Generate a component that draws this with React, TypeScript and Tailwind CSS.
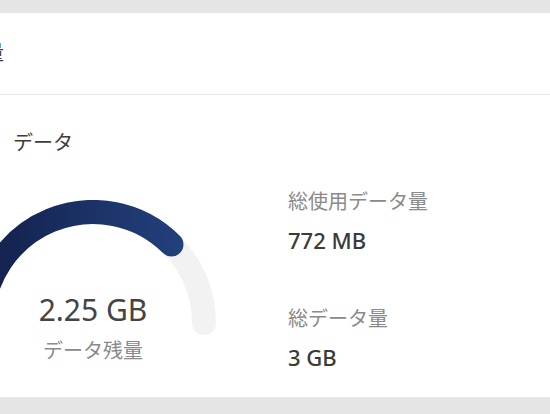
import React from "react"

function Gauge({ remaining, total }: { remaining: number; total: number }) {
  const cx = 123
  const cy = 123
  const r = 111
  const angle = Math.PI * (1 - remaining / total)
  const ex = cx + r * Math.cos(angle)
  const ey = cy - r * Math.sin(angle)

  return (
    <svg width="246" height="136" viewBox="0 0 246 136" className="absolute left-0 top-0">
      <defs>
        <linearGradient id="gaugeFill" gradientUnits="userSpaceOnUse" x1="0" y1="0" x2="210" y2="0">
          <stop offset="0" stopColor="#121e48" />
          <stop offset="1" stopColor="#22407c" />
        </linearGradient>
      </defs>
      <path
        d={`M ${cx - r} ${cy} A ${r} ${r} 0 0 1 ${cx + r} ${cy}`}
        fill="none"
        stroke="#f2f2f2"
        strokeWidth="24"
        strokeLinecap="round"
      />
      <path
        d={`M ${cx - r} ${cy} A ${r} ${r} 0 0 1 ${ex.toFixed(2)} ${ey.toFixed(2)}`}
        fill="none"
        stroke="url(#gaugeFill)"
        strokeWidth="24"
        strokeLinecap="round"
      />
    </svg>
  )
}

function Stat({ label, value, className }: { label: string; value: string; className?: string }) {
  return (
    <div className={className}>
      <div className="text-[20px] leading-none text-[#8a8a8a]">{label}</div>
      <div className="mt-[17px] text-[22px] leading-none font-medium text-[#3a3a3a]">{value}</div>
    </div>
  )
}

export default function App() {
  return (
    <div
      className="w-[550px] h-[414px] overflow-hidden bg-[#e5e5e5] pt-[13px]"
      style={{ fontFamily: '"Noto Sans", "Noto Sans CJK JP", sans-serif' }}
    >
      <div className="bg-white">
        <div className="h-[81px] pt-[30px] whitespace-nowrap">
          <h1 className="-ml-[116px] text-[20px] leading-none text-[#3a3a3a]">データ使用量</h1>
        </div>
        <div className="h-px bg-[#e9e9e9]" />

        <section className="h-[302px] pt-[38px]">
          <h2 className="pl-[13px] text-[20px] leading-none text-[#3c3c3c]">データ</h2>

          <div className="mt-[37px] flex">
            <div className="relative -ml-[30px] mt-[10px] h-[162px] w-[246px] shrink-0">
              <Gauge remaining={2.25} total={3} />
              <div className="absolute inset-x-0 top-[95px] flex flex-col items-center">
                <span className="text-[30px] leading-none text-[#444]">2.25 GB</span>
                <span className="mt-[16px] text-[20px] leading-none text-[#8a8a8a]">データ残量</span>
              </div>
            </div>

            <div className="ml-[72px] flex flex-col pt-[2px]">
              <Stat label="総使用データ量" value="772 MB" />
              <Stat label="総データ量" value="3 GB" className="mt-[58px]" />
            </div>
          </div>
        </section>
      </div>
    </div>
  )
}
